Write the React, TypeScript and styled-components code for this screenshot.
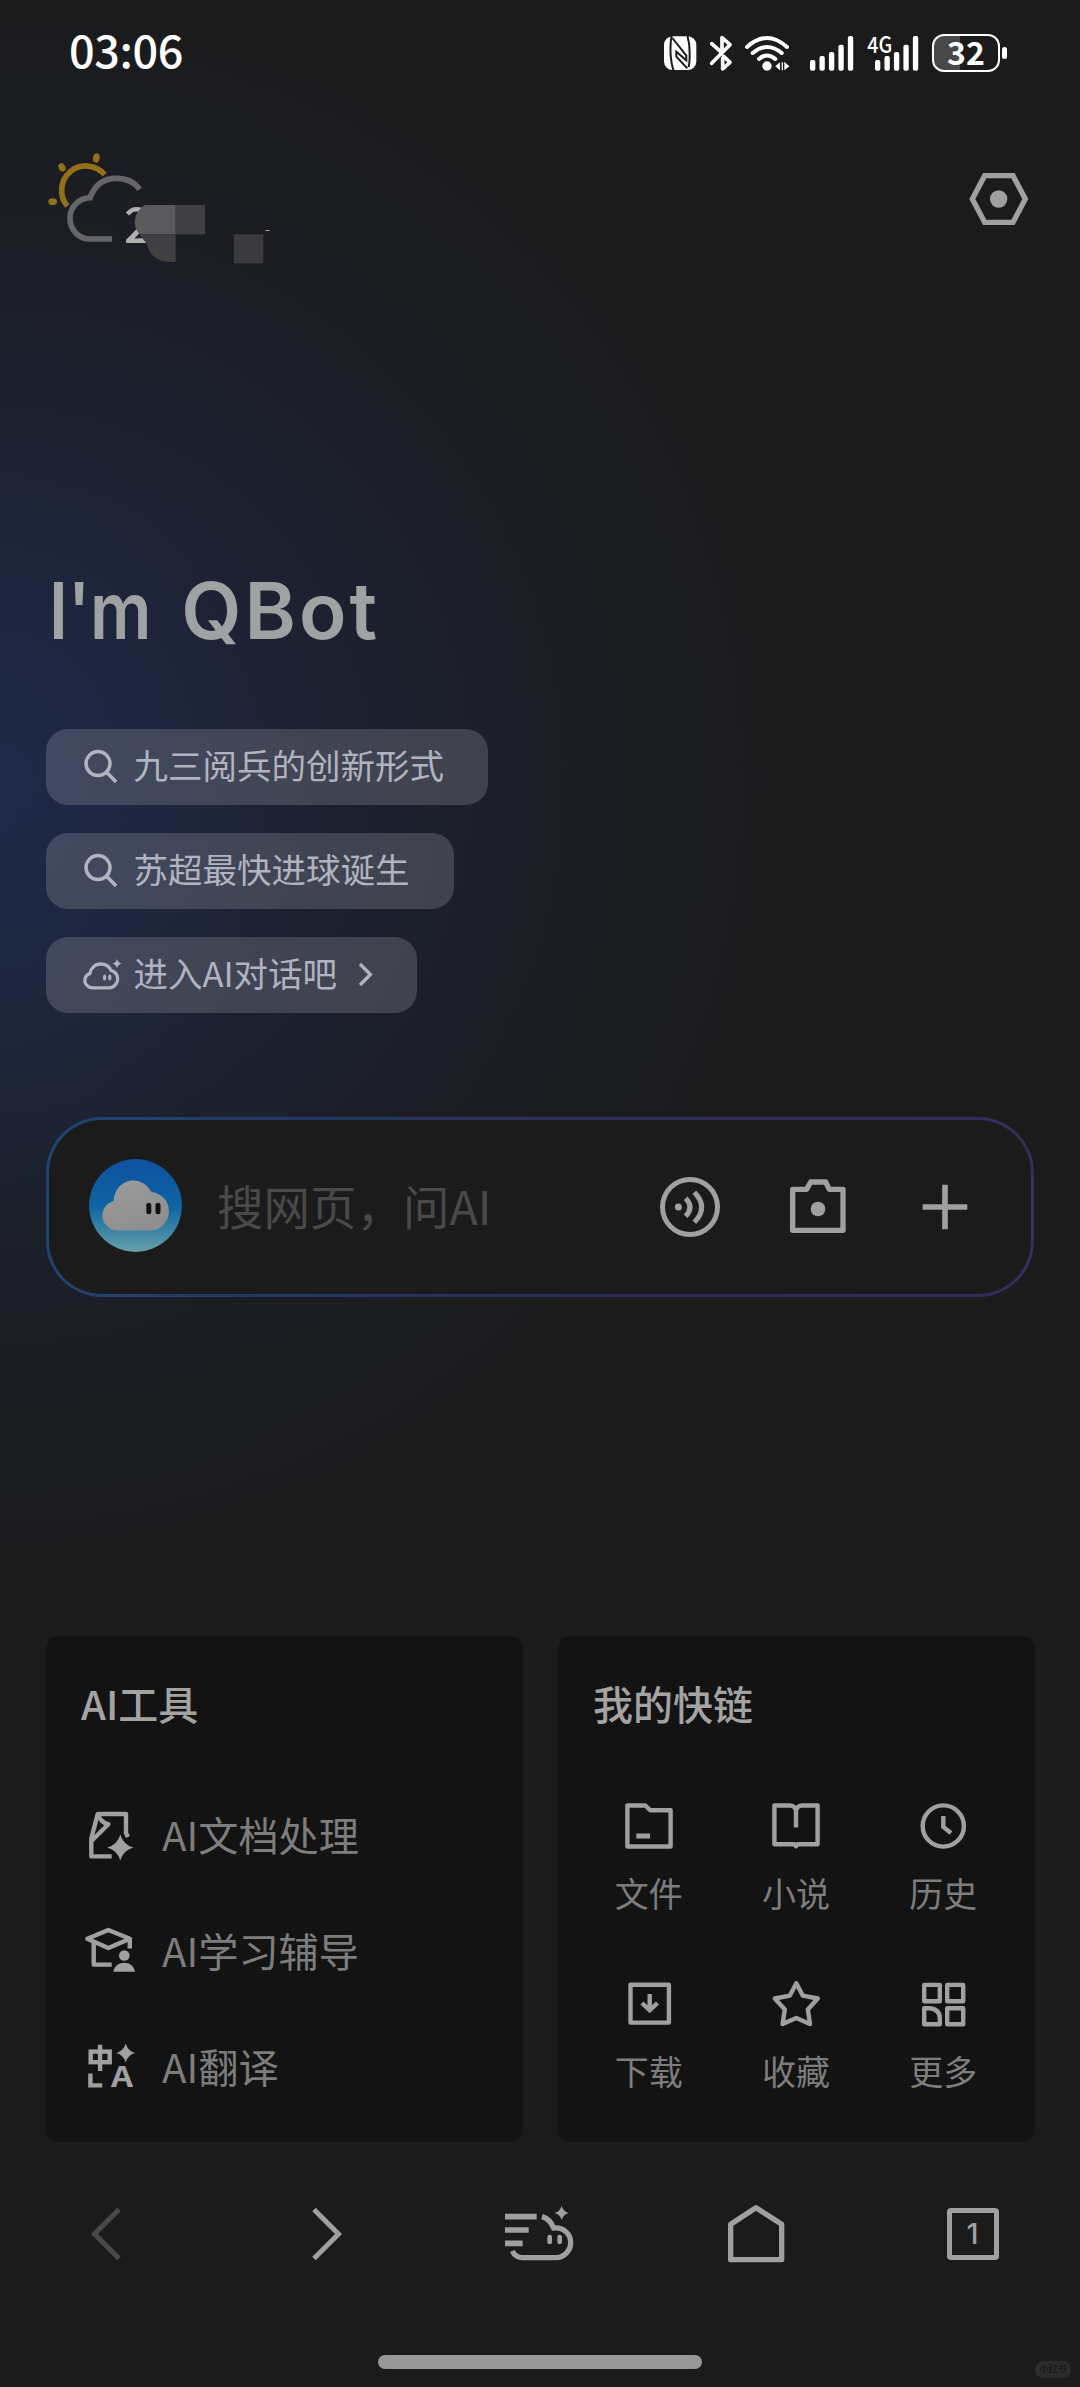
import React from "react";
import styled, { createGlobalStyle } from "styled-components";

const FONT = '"Noto Sans CJK SC", "Noto Sans", sans-serif';
const INK = "#a0a0a0";

const GlobalStyle = createGlobalStyle`
  * { box-sizing: border-box; }
  body { margin: 0; background: #1b1b1b; font-family: ${FONT}; }
  svg { display: block; flex: none; }
`;

const Page = styled.main`
  position: relative;
  display: flex;
  flex-direction: column;
  width: 1080px;
  height: 2387px;
  overflow: hidden;
  color: ${INK};
  background:
    radial-gradient(ellipse 260px 400px at 0 810px, rgba(28, 50, 84, 0.36) 0%, rgba(28, 44, 80, 0) 100%),
    radial-gradient(ellipse 820px 820px at 0 780px, #1f2443 0%, #1e243a 22%, #1c212e 48%, #1b1d23 72%, #1b1b1b 100%),
    #1b1b1b;
`;

const StatusBar = styled.header`
  display: flex;
  align-items: center;
  justify-content: space-between;
  height: 104px;
  padding: 0 73px 0 69px;
  color: #fff;
`;

const Time = styled.time`
  padding-bottom: 8px;
  font-size: 45px;
  font-weight: 500;
  line-height: 45px;
  letter-spacing: -0.4px;
`;

const StatusIcons = styled.div`
  display: flex;
  align-items: center;
  padding-top: 1px;
`;

const StatusSvg = styled.svg<{ $ml: number }>`
  margin-left: ${(p) => p.$ml}px;
`;

const Battery = styled.div`
  display: flex;
  align-items: center;
  gap: 2px;
  margin-left: 13px;
`;

const BatteryBody = styled.div`
  display: flex;
  align-items: center;
  justify-content: center;
  width: 68px;
  height: 38px;
  padding-bottom: 3px;
  border: 2px solid #fff;
  border-radius: 12px;
  background: linear-gradient(90deg, #484848 26px, transparent 26px);
  font-size: 32px;
  font-weight: 700;
  line-height: 32px;
`;

const BatteryTip = styled.i`
  width: 5px;
  height: 12px;
  border-radius: 3px;
  background: #fff;
`;

const TopRow = styled.section`
  display: flex;
  align-items: flex-start;
  justify-content: space-between;
  height: 176px;
  padding: 36px 51px 0 30px;
`;

const Weather = styled.div`
  position: relative;
  display: flex;
  width: 260px;
  height: 140px;
`;

const Temperature = styled.span`
  margin-top: 57px;
  margin-left: -2px;
  font-size: 49px;
  font-weight: 500;
  line-height: 49px;
  color: #b0b0b2;
`;

const Mosaic = styled.svg`
  position: absolute;
  left: 0;
  top: 0;
`;

const SettingsButton = styled.button`
  margin: 32px 0 0;
  padding: 0;
  border: 0;
  background: none;
`;

const Title = styled.h1`
  display: flex;
  gap: 15px;
  height: 449px;
  margin: 0;
  padding: 283px 0 0 49px;
  font-family: Inter, sans-serif;
  font-size: 78px;
  font-weight: 600;
  line-height: 96px;
  color: #9fa2a2;
`;

const Word = styled.span<{ $spacing: number; $stretch: number }>`
  letter-spacing: ${(p) => p.$spacing}px;
  transform: scaleX(${(p) => p.$stretch});
  transform-origin: left center;
`;

const Chips = styled.section`
  display: flex;
  flex-direction: column;
  align-items: flex-start;
  gap: 28px;
  padding-left: 46px;
`;

const Chip = styled.button`
  display: flex;
  align-items: center;
  height: 76px;
  padding: 0 44px 0 36px;
  border: 0;
  border-radius: 22px;
  background: rgba(150, 150, 160, 0.3);
  color: #b0b3c0;
  font-family: ${FONT};
  font-size: 34.5px;
  line-height: 50px;
  gap: 11.5px;
`;

const Label = styled.span<{ $lift: number }>`
  padding-bottom: ${(p) => p.$lift * 2}px;
`;

const SearchBox = styled.section`
  display: flex;
  align-items: center;
  width: 988px;
  height: 180px;
  margin: 104px 0 0 46px;
  padding: 0 61px 0 40px;
  border: 3px solid transparent;
  border-radius: 56px;
  background:
    linear-gradient(#1b1b1b, #1b1b1b) padding-box,
    linear-gradient(90deg, #1f4470 0%, #26345f 35%, #2e2c58 60%, #352d5c 100%) border-box;
`;

const Avatar = styled.svg`
  margin-bottom: 3px;
`;

const Placeholder = styled.span`
  flex: 1;
  margin-left: 35px;
  padding-bottom: 5px;
  font-size: 46.5px;
  line-height: 60px;
  color: #494949;
`;

const SearchActions = styled.div`
  display: flex;
  align-items: center;
  gap: 69px;
`;

const PlusIcon = styled.svg`
  margin-left: 4px;
`;

const Cards = styled.section`
  display: flex;
  gap: 35px;
  margin: 339px 0 0 46px;
`;

const Card = styled.article`
  width: 477px;
  height: 506px;
  padding: 39px 36px 0;
  border-radius: 13px;
  background: #131313;
`;

const CardTitle = styled.h2`
  margin: 0 0 0 -1px;
  font-size: 40px;
  font-weight: 500;
  line-height: 56px;
  color: #a3a3a3;
`;

const ToolList = styled.div`
  margin-top: 47px;
`;

const ToolRow = styled.div`
  display: flex;
  align-items: center;
  gap: 24px;
  height: 115.7px;
  font-size: 40.2px;
  line-height: 56px;
  color: #7d7d7d;
`;

const LinkGrid = styled.div`
  display: grid;
  grid-template-columns: repeat(3, 147.3px);
  grid-auto-rows: 177.5px;
  margin: 67px 0 0 -19px;
`;

const LinkCell = styled.div`
  display: flex;
  flex-direction: column;
  align-items: center;
  gap: 15px;
  font-size: 34px;
  line-height: 48px;
  color: #7d7d7d;
`;

const NavBar = styled.nav`
  display: flex;
  align-items: center;
  height: 184px;
  padding-left: 91px;
`;

const NavItem = styled.div<{ $gap?: number }>`
  flex: none;
  margin-left: ${(p) => p.$gap ?? 0}px;
`;

const TabCount = styled.span`
  display: flex;
  align-items: center;
  justify-content: center;
  width: 52px;
  height: 52px;
  border: 5px solid ${INK};
  border-radius: 4px;
  font-family: Inter, sans-serif;
  font-size: 29px;
  font-weight: 500;
  line-height: 42px;
`;

const HomeIndicator = styled.div`
  align-self: center;
  width: 324px;
  height: 14px;
  margin-top: 29px;
  border-radius: 7px;
  background: #989898;
`;

const Watermark = styled.span`
  position: absolute;
  right: 9px;
  bottom: 9px;
  width: 36px;
  height: 17px;
  border-radius: 9px;
  background: #2c2c2c;
  color: #171717;
  font-size: 9px;
  font-weight: 500;
  line-height: 16px;
  text-align: center;
`;

const spark = (x: number, y: number, r: number) => {
  const k = r * 0.22;
  return `M${x} ${y - r}Q${x + k} ${y - k} ${x + r} ${y}Q${x + k} ${y + k} ${x} ${y + r}Q${x - k} ${y + k} ${x - r} ${y}Q${x - k} ${y - k} ${x} ${y - r}Z`;
};

const BAR_TOPS = [177, 165, 153, 131, 105];

const SignalBars = ({ x }: { x: number }) => (
  <>
    {BAR_TOPS.map((top, i) => (
      <rect key={top} x={x + i * 28.4} y={top} width="16" height={209 - top} rx="6" fill="#fff" />
    ))}
  </>
);

const IconBox = ({ children, w = 4.4 }: { children: React.ReactNode; w?: number }) => (
  <svg width="56" height="56" viewBox="0 0 56 56" fill="none" stroke={INK} strokeWidth={w} strokeLinejoin="round">
    {children}
  </svg>
);

const SearchGlyph = () => (
  <svg width="40" height="40" viewBox="0 0 40 40" fill="none" stroke="#b0b3c0" strokeWidth="3.5">
    <circle cx="16" cy="16.6" r="12" />
    <path d="M24.6 25.2L34.2 35" />
  </svg>
);

const CloudGlyph = () => (
  <svg width="40" height="40" viewBox="0 0 40 40" fill="none" stroke="#b0b3c0" strokeWidth="3.3">
    <path d="M11 32.8H27.5A8.9 8.9 0 0 0 29 15.3C27 11.2 23 9 18.6 9C13 9 8.8 13 8 18.4C5 19.6 2.8 22.4 2.8 25.4C2.8 29.6 6.4 32.8 11 32.8Z" />
    <g fill="#b0b3c0" stroke="none">
      <ellipse cx="22.6" cy="22.6" rx="1.6" ry="3" />
      <ellipse cx="27.8" cy="22.6" rx="1.6" ry="3" />
      <path d={spark(35, 8.6, 4.6)} />
    </g>
  </svg>
);

const tools = [
  {
    label: "AI文档处理",
    icon: (
      <IconBox>
        <path d="M29.7 48.4H9.3V30.5L15.7 6H44V25L46 29" />
        <path d="M15.7 6C17.5 11 20 15 26.3 16.2L10 32.5" />
        <path d={spark(38.3, 39.5, 13)} fill={INK} stroke="none" />
      </IconBox>
    ),
  },
  {
    label: "AI学习辅导",
    icon: (
      <IconBox>
        <path d="M5.3 14.7L26.3 6L48 14.7L26.3 24Z" />
        <path d="M47.8 14V24.5M11.7 17.5V40.6H29.7" />
        <circle cx="42.3" cy="31.5" r="5.3" fill={INK} stroke="none" />
        <path d="M31.3 47.7C32.5 42 36.8 38.8 42.2 38.8S51.8 42 53 47.7Z" fill={INK} stroke="none" />
      </IconBox>
    ),
  },
  {
    label: "AI翻译",
    icon: (
      <IconBox>
        <rect x="8.7" y="12.6" width="19" height="10.6" strokeLinejoin="miter" />
        <path d="M18.1 5.8V32M8.4 34.4V46.4H20.2" strokeLinejoin="miter" />
        <path d={spark(43.7, 14, 9.4)} fill={INK} stroke="none" />
        <text x="39.9" y="48.4" fill={INK} stroke="none" fontFamily={FONT} fontSize="28" fontWeight="700" textAnchor="middle" textLength="22" lengthAdjust="spacingAndGlyphs">
          A
        </text>
      </IconBox>
    ),
  },
];

const links = [
  {
    label: "文件",
    icon: (
      <IconBox>
        <path d="M6.4 7.5H24.4L29.2 12.3H49.6V48.5H6.4Z" />
        <path d="M15.3 38H29" strokeWidth="5" />
      </IconBox>
    ),
  },
  {
    label: "小说",
    icon: (
      <IconBox>
        <path d="M28 29.4V12.5Q26.6 7.5 22 7.5H6.4V46.2H26.4L28 48.2L29.6 46.2H49.6V7.5H34Q29.4 7.5 28 12.5" />
      </IconBox>
    ),
  },
  {
    label: "历史",
    icon: (
      <IconBox>
        <circle cx="28.3" cy="28" r="20.6" />
        <path d="M28.3 18V29L36 35" strokeLinejoin="miter" />
      </IconBox>
    ),
  },
  {
    label: "下载",
    icon: (
      <IconBox>
        <rect x="9.5" y="8.8" width="38.4" height="37.8" />
        <path d="M28.7 18V34M20.9 27L28.7 34.2L36.5 27" strokeLinejoin="miter" />
      </IconBox>
    ),
  },
  {
    label: "收藏",
    icon: (
      <IconBox>
        <path d="M28.3 7.2L34.7 19.6L49.8 22.5L39.8 33.4L42 48L28.3 42L14.6 48L16.8 33.4L6.8 22.5L21.9 19.6Z" />
      </IconBox>
    ),
  },
  {
    label: "更多",
    icon: (
      <IconBox>
        <rect x="9.2" y="8.9" width="15.6" height="16.3" />
        <rect x="32.2" y="8.9" width="16" height="16.3" />
        <rect x="32.2" y="32.2" width="16" height="16" />
        <path d="M9.2 32.2H14.8Q24.8 33.5 24.8 42V48.2H9.2Z" />
      </IconBox>
    ),
  },
];

export default function App() {
  return (
    <Page>
      <GlobalStyle />
      <StatusBar>
        <Time>03:06</Time>
        <StatusIcons>
          <StatusSvg $ml={0} width="33" height="36" viewBox="129 103 99 108">
            <rect x="129" y="107" width="97" height="101" rx="26" fill="#fff" />
            <path d="M152 104Q147 130 149 165Q151 192 158 211M199 104Q206 128 206 158Q206 188 203 199" fill="none" stroke="#1b1b1b" strokeWidth="6" />
            <path d="M154 112L196 165V179L166 153V168L199 203" fill="none" stroke="#1b1b1b" strokeWidth="6" />
          </StatusSvg>
          <StatusSvg $ml={12} width="24" height="38" viewBox="265 99 72 114" fill="none" stroke="#fff" strokeWidth="11" strokeLinejoin="round" strokeLinecap="round">
            <path d="M273 128L298 150M273 187L328 131L304 110V152M306 172V204L328 184L309 166" />
          </StatusSvg>
          <StatusSvg $ml={11} width="46" height="38" viewBox="372 99 138 114" fill="none" stroke="#fff" strokeWidth="12" strokeLinecap="round">
            <path d="M381 138Q441 84 501 138M398 156Q441 120 485 156M417 174Q441 153 466 174" />
            <circle cx="441" cy="195" r="14" fill="#fff" stroke="none" />
            <path d="M480 184V208L466 196ZM485 184V208H489V184ZM493 182V208L508 196Z" fill="#fff" stroke="none" />
          </StatusSvg>
          <StatusSvg $ml={20} width="44" height="38" viewBox="570 99 132 114">
            <SignalBars x={570} />
          </StatusSvg>
          <StatusSvg $ml={13} width="52" height="54" viewBox="741 75 156 162">
            <text x="742" y="156" fill="#fff" fontFamily={FONT} fontSize="67" fontWeight="500" textLength="75" lengthAdjust="spacingAndGlyphs">
              4G
            </text>
            <SignalBars x={765} />
          </StatusSvg>
          <Battery>
            <BatteryBody>32</BatteryBody>
            <BatteryTip />
          </Battery>
        </StatusIcons>
      </StatusBar>

      <TopRow>
        <Weather>
          <svg width="96" height="140" viewBox="0 0 288 420" overflow="visible" fill="none">
            <path d="M112 198A69 69 0 0 1 224 104" stroke="#927019" strokeWidth="17" />
            <g fill="#927019">
              <ellipse cx="68" cy="185" rx="13" ry="10" />
              <ellipse cx="96" cy="82" rx="10" ry="13" transform="rotate(-30 96 82)" />
              <ellipse cx="199" cy="54" rx="10" ry="14" transform="rotate(12 199 54)" />
            </g>
            <path d="M246 297H179C146 297 120 270 120 234C120 202 146 175 180 173C194 135 222 115 260 115C288 115 314 127 329 148" stroke="#65656a" strokeWidth="17" />
          </svg>
          <Temperature>2</Temperature>
          <Mosaic width="260" height="140" viewBox="0 0 780 420">
            <path d="M345 195H437V283H330Q314 268 314 245Q316 212 345 195Z" fill="#5a5a5d" />
            <rect x="437" y="195" width="88" height="88" fill="#404042" />
            <path d="M328 283H437V366H412Q362 360 350 311Z" fill="#404042" />
            <rect x="612" y="283" width="88" height="87" fill="#3b3a3f" />
            <rect x="707" y="270" width="11" height="3" fill="#aaa" />
          </Mosaic>
        </Weather>
        <SettingsButton aria-label="设置">
          <svg width="60" height="54" viewBox="1048 516 180 162">
            <path d="M1095 527H1180L1217 597L1180 667H1095L1058 597Z" fill="none" stroke={INK} strokeWidth="16" />
            <circle cx="1137" cy="597" r="26" fill={INK} />
          </svg>
        </SettingsButton>
      </TopRow>

      <Title>
        <Word $spacing={0} $stretch={0.875}>I'm</Word>
        <Word $spacing={3} $stretch={1}>QBot</Word>
      </Title>

      <Chips>
        <Chip>
          <SearchGlyph />
          <Label $lift={3}>九三阅兵的创新形式</Label>
        </Chip>
        <Chip>
          <SearchGlyph />
          <Label $lift={3}>苏超最快进球诞生</Label>
        </Chip>
        <Chip>
          <CloudGlyph />
          <Label $lift={3}>进入AI对话吧</Label>
          <svg width="24" height="26" viewBox="0 0 24 26" fill="none" stroke="#b0b3c0" strokeWidth="3.3">
            <path d="M11 2L21.4 12.5L11 23" />
          </svg>
        </Chip>
      </Chips>

      <SearchBox>
        <Avatar width="93" height="93" viewBox="0 0 93 93">
          <defs>
            <linearGradient id="sky" x1="0" y1="0" x2="0" y2="1">
              <stop offset="0" stopColor="#10509f" />
              <stop offset="0.5" stopColor="#0c64a2" />
              <stop offset="1" stopColor="#66a0a8" />
            </linearGradient>
            <linearGradient id="puff" gradientUnits="userSpaceOnUse" x1="30" y1="22" x2="45" y2="72">
              <stop offset="0" stopColor="#9a9a9a" />
              <stop offset="1" stopColor="#8f8f90" />
            </linearGradient>
          </defs>
          <circle cx="46.5" cy="46.5" r="46.4" fill="url(#sky)" />
          <path d="M27.5 71.5H62A19.3 19.3 0 0 0 62 33Q62 33 62.5 33C56 21 44 20 38 22.5C29 26 24.8 34 24.7 42A15 15 0 0 0 27.5 71.5Z" fill="url(#puff)" />
          <rect x="57.3" y="43.7" width="5" height="11.5" rx="2.5" fill="#101010" />
          <rect x="66.5" y="43.7" width="5" height="11.5" rx="2.5" fill="#101010" />
        </Avatar>
        <Placeholder>搜网页，问AI</Placeholder>
        <SearchActions>
          <svg width="60" height="60" viewBox="300 260 180 180" fill="none" stroke={INK} strokeWidth="15">
            <circle cx="390" cy="350" r="82.5" />
            <path d="M377 324Q403 351 377 378M403 306Q447 351 403 396" />
            <circle cx="355" cy="350" r="10.5" fill={INK} stroke="none" />
          </svg>
          <svg width="58" height="60" viewBox="687 260 174 180" fill="none" stroke={INK} strokeWidth="16" strokeLinejoin="round">
            <path d="M698 297H740L752 275H797L808 297H849V420H698Z" />
            <circle cx="774" cy="356" r="22" fill={INK} stroke="none" />
          </svg>
          <PlusIcon width="50" height="60" viewBox="1080 260 150 180" fill="none" stroke={INK} strokeWidth="17">
            <path d="M1088 350H1222M1155 283V417" />
          </PlusIcon>
        </SearchActions>
      </SearchBox>

      <Cards>
        <Card>
          <CardTitle>AI工具</CardTitle>
          <ToolList>
            {tools.map((t) => (
              <ToolRow key={t.label}>
                {t.icon}
                <Label $lift={1.5}>{t.label}</Label>
              </ToolRow>
            ))}
          </ToolList>
        </Card>
        <Card>
          <CardTitle>我的快链</CardTitle>
          <LinkGrid>
            {links.map((l) => (
              <LinkCell key={l.label}>
                {l.icon}
                {l.label}
              </LinkCell>
            ))}
          </LinkGrid>
        </Card>
      </Cards>

      <NavBar>
        <NavItem>
          <svg width="30" height="56" viewBox="0 0 30 56" fill="none" stroke="#494949" strokeWidth="5">
            <path d="M28 3.5L3.5 28L28 52.5" />
          </svg>
        </NavItem>
        <NavItem $gap={191}>
          <svg width="30" height="56" viewBox="0 0 30 56" fill="none" stroke={INK} strokeWidth="5">
            <path d="M2 3.5L26.5 28L2 52.5" />
          </svg>
        </NavItem>
        <NavItem $gap={163}>
          <svg width="69" height="60" viewBox="75 71 207 180" fill="none" stroke={INK} strokeWidth="16">
            <path d="M75 109H170M75 149H146M75 189H128" strokeWidth="17" />
            <path d="M186 109C203 114 214 126 221 143C252 140 272 162 272 187A45 45 0 0 1 228 232H128C112 232 103 225 97 212" />
            <rect x="202" y="163" width="14" height="29" rx="7" fill={INK} stroke="none" />
            <rect x="232" y="163" width="14" height="29" rx="7" fill={INK} stroke="none" />
            <path d={spark(245, 98, 21)} fill={INK} stroke="none" />
          </svg>
        </NavItem>
        <NavItem $gap={153}>
          <svg width="58" height="60" viewBox="742 71 174 180" fill="none" stroke={INK} strokeWidth="16" strokeLinejoin="round">
            <path d="M753 238V132L829 82L906 132V238Z" />
          </svg>
        </NavItem>
        <NavItem $gap={161.5}>
          <TabCount>1</TabCount>
        </NavItem>
      </NavBar>

      <HomeIndicator />
      <Watermark>小红书</Watermark>
    </Page>
  );
}
